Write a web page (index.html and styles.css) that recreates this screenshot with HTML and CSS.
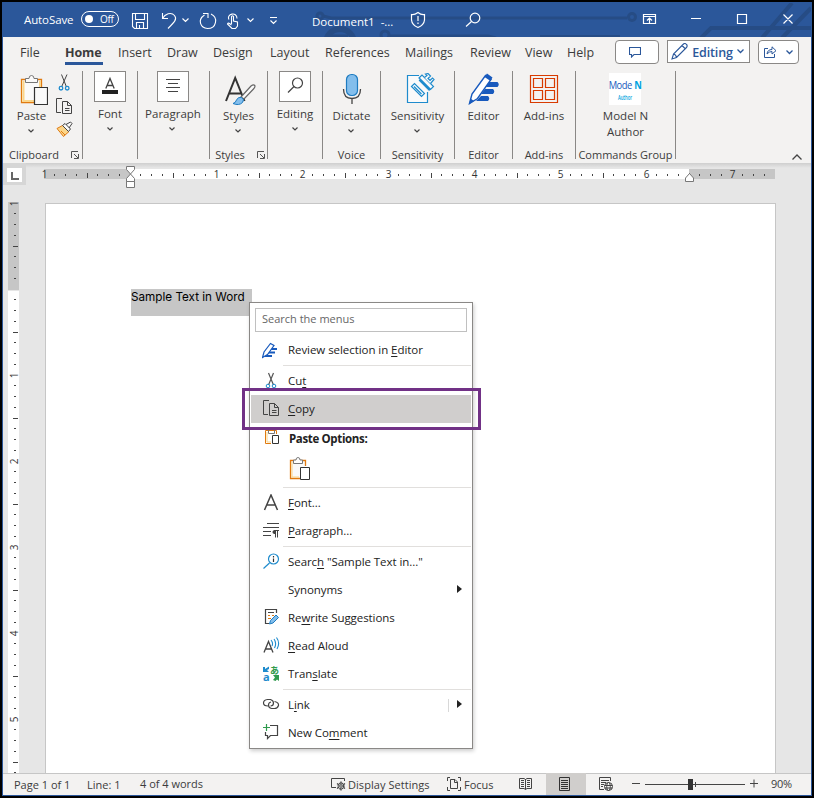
FILE: index.html
```html
<!DOCTYPE html>
<html lang="en">
<head>
<meta charset="utf-8">
<title>Document1 - Word</title>
<link rel="stylesheet" href="styles.css">
</head>
<body>
<div class="window">
  <header class="titlebar">
    <svg class="circuit" width="808" height="34" viewBox="3 3 808 34" fill="none" stroke="#264c85" stroke-width="3">
      <path d="M323 16 331 18H627"/><circle cx="320" cy="16" r="3"/><circle cx="632" cy="17" r="3.5"/>
      <circle cx="340" cy="43" r="14" stroke-width="6"/><path d="M331 36h17M388 36h100l8 2"/><circle cx="385" cy="35" r="4"/>
      <path d="M540 37h80M701 38l10-10h100M762 38l30-35M782 38l29-30" stroke-width="4"/>
    </svg>
    <span class="autosave">AutoSave</span>
    <span class="toggle"><i></i>Off</span>
    <svg class="ico" width="204" height="34" viewBox="119 3 204 34" fill="none" stroke="#fff" stroke-width="1.1">
      <path d="M132.500 13.500H147.500V28.500H134.500L132.500 26.500ZM135.500 13.500V19.500H144.500V13.500M136.500 28.500V22.500H143.500V28.500M139.500 25V28.500"/>
      <path d="M162.500 13V18.500H168M162.500 18.500C165 14 171 11.500 174.500 15.500C177.500 19 174.500 22 168 28.500M182.500 18.500 185.500 21.500 188.500 18.500M203 13.500H208V18M204.500 15C197 20 200.500 28 207.500 28.500C216.500 28.500 218.500 17.500 211 14"/>
      <path d="M229 19.500C226 14 237 11 237 18.500M231.500 24V16.500Q232.500 15 233.500 16.500V21L237.500 22V26L235.500 28.500H232L227.500 24Q228 22.500 229.500 23.500L231.500 25M247.500 18.500 250.500 21.500 253.500 18.500M270 17.500H277M270.500 20.500 273.500 23.500 276.500 20.500"/>
    </svg>
    <span class="docname">Document1&nbsp; -...</span>
    <svg class="ico" width="401" height="34" viewBox="403 3 401 34" fill="none" stroke="#fff" stroke-width="1.2">
      <path d="M418 12.500Q414.500 15 411.500 14.500V20Q412 25 418 27.500Q424 25 424.500 20V14.500Q421 15 418 12.500ZM418 16V21M418 22.500V24"/>
      <circle cx="475" cy="18" r="4.800"/><path d="M471.500 21.500 466 26.500"/>
      <path d="M643.500 14.500H655.500V23.500H643.500ZM643.500 16.500H655.500M649.500 23V18M647 20.500 649.500 18 652 20.500M691 18.500H701M737.500 14.500H746.500V23.500H737.500ZM783.500 14.500 792.500 23.500M792.500 14.500 783.500 23.500"/>
    </svg>
  </header>

  <nav class="tabs">
    <span class="t-file">File</span><span class="t-home active"><b>Home</b></span><span class="t-insert">Insert</span><span class="t-draw">Draw</span><span class="t-design">Design</span><span class="t-layout">Layout</span><span class="t-references">References</span><span class="t-mailings">Mailings</span><span class="t-review">Review</span><span class="t-view">View</span><span class="t-help">Help</span>
    <button class="btn comments"><svg width="12" height="11" viewBox="0 0 12 11" fill="none" stroke="#2b579a" stroke-width="1.1"><path d="M.5.500H11.500V7.500H5L2.500 10V7.500H.5Z"/></svg></button>
    <button class="btn mode"><svg width="17" height="17" viewBox="0 0 17 17" fill="none" stroke="#2b579a" stroke-width="1.100"><path d="M1 16 2.500 11 12 1.500Q14-.500 15.500 1.500Q17 3 15 5L5.500 14.500ZM11 2.500 14 5.500M2.500 11Q5 11.500 5.500 14.500"/></svg><span>Editing</span><svg width="7" height="5" viewBox="0 0 7 5" fill="none" stroke="#2b579a" stroke-width="1.300"><path d="M.5.500 3.500 3.500 6.500.500"/></svg></button>
    <button class="btn share"><svg width="13" height="12" viewBox="0 0 13 12" fill="none" stroke="#2b579a"><path d="M4 2.500H.5V11.500H10.500V8M3 8Q3.500 3.500 8 3.500V.8L12 4.700 8 8V5.500Q5 5.500 3 8Z"/></svg><svg width="7" height="5" viewBox="0 0 7 5" fill="none" stroke="#2b579a" stroke-width="1.300"><path d="M.5.500 3.500 3.500 6.500.500"/></svg></button>
  </nav>

  <section class="ribbon">
    <div class="group clipboard">
      <div class="cliprow">
        <div class="paste">
          <svg class="board" width="28" height="30" viewBox="20 75 28 30" fill="none"><path d="M21.500 79.500H41.500V102.500H21.500Z" fill="#fafafa" stroke="#e07a10" stroke-width="1.300"/><path d="M23.500 81V101H34M40 81V87" stroke="#fbd68a" stroke-width="2"/><path d="M25.500 82.500V78.500H29Q29 75.500 31.500 75.500T34 78.500H37.500V82.500Z" fill="#fafafa" stroke="#777"/><path d="M34.500 87.500H47.500V104.500H34.500Z" fill="#fafafa" stroke="#333" stroke-width="1.200"/></svg>
          <span>Paste</span>
          <svg class="chev" width="6" height="4" viewBox="0 0 6 4"><path d="M.5.500 3 3 5.500.500"/></svg>
        </div>
        <svg width="18" height="66" viewBox="55 73 18 66" fill="none" stroke="#444">
          <path d="M61.500 74.500 66.500 87M67 74.500 61.500 87"/><g stroke="#1e8bcd" stroke-width="1.300"><circle cx="61" cy="88.200" r="1.800"/><circle cx="67.200" cy="88.200" r="1.800"/></g>
          <path d="M62 98.500H56.500V112.500H61M62.500 101.500H67.500L71.500 105.500V113.500H62.500ZM67.500 101.500V105.500H71.500M65 108.500H69.500M65 110.500H69.500"/>
          <path d="M57 128.500 63.500 136.500 69 131.500 62.500 125.500Z" fill="#fbd68a" stroke="#e07a10"/><path d="M61 131 65 135" stroke="#e07a10"/><path d="M62.500 125.500 65 123.500 70.500 129 68.500 131.500ZM66 124.500 70.500 122 72 123.500 69 128" fill="#fafafa" stroke="#444"/>
        </svg>
      </div>
      <div class="glabel">Clipboard<svg class="launch" width="8" height="8" viewBox="0 0 8 8"><path d="M7 .5H.5V7M3 3 7 7M7.500 3V7.500H3"/></svg></div>
    </div>
    <div class="group boxed g-font"><div class="box"><svg width="30" height="29" viewBox="95 72 30 29"><path d="M105.800 88.500 110 78.500 114.200 88.500M107.200 85.500H112.800" fill="none" stroke="#444" stroke-width="1.300"/><path d="M102 90H118V94H102Z" fill="#222"/></svg></div><span>Font</span><svg class="chev" width="6" height="4" viewBox="0 0 6 4"><path d="M.5.500 3 3 5.500.500"/></svg></div>
    <div class="group boxed g-para"><div class="box"><svg width="30" height="29" viewBox="158 72 30 29" stroke="#444"><path d="M166 79.500H180M168 83.500H178M166 87.500H180M168 91.500H178"/></svg></div><span>Paragraph</span><svg class="chev" width="6" height="4" viewBox="0 0 6 4"><path d="M.5.500 3 3 5.500.500"/></svg></div>
    <div class="group g-styles"><svg class="big" width="34" height="34" viewBox="223 73 34 34" fill="none"><path d="M226 101 235.200 78 244.500 101M229 93.500H241.500" stroke="#333" stroke-width="2"/><path d="M241 97 251 86Q253.500 84 254.800 85.500Q255.500 87 253.500 89L244 99Z" fill="#fafafa" stroke="#666" stroke-width="1.200"/><path d="M233 103.500Q235.500 103 236.500 100Q238 96.500 241.500 97.500Q245 99.500 242.500 102.500Q239 106 233 103.500Z" fill="#83beec" stroke="#1e7bc0"/></svg><span>Styles</span><svg class="chev" width="6" height="4" viewBox="0 0 6 4"><path d="M.5.500 3 3 5.500.500"/></svg><div class="glabel">Styles<svg class="launch" width="8" height="8" viewBox="0 0 8 8"><path d="M7 .5H.5V7M3 3 7 7M7.500 3V7.500H3"/></svg></div></div>
    <div class="group boxed g-edit"><div class="box"><svg width="30" height="29" viewBox="280 72 30 29" fill="none" stroke="#444" stroke-width="1.200"><circle cx="297.500" cy="83" r="5"/><path d="M294 86.500 288 92.500"/></svg></div><span>Editing</span><svg class="chev" width="6" height="4" viewBox="0 0 6 4"><path d="M.5.500 3 3 5.500.500"/></svg></div>
    <div class="group g-voice"><svg class="big" width="34" height="34" viewBox="335 73 34 34" fill="none"><rect x="346.500" y="74.500" width="11" height="21" rx="5" fill="#83beec" stroke="#1e7bc0" stroke-width="1.200"/><path d="M343.500 89Q343.500 98.500 352 98.500T360.500 89M352 98.500V104" stroke="#444" stroke-width="1.300"/></svg><span>Dictate</span><svg class="chev" width="6" height="4" viewBox="0 0 6 4"><path d="M.5.500 3 3 5.500.500"/></svg><div class="glabel">Voice</div></div>
    <div class="group g-sens"><svg class="big" width="36" height="34" viewBox="401 73 36 34" fill="none" stroke="#1e8bcd" stroke-width="1.200"><path d="M419 75.500H407.500V102.500H427.500V92" fill="#fafafa"/><path d="M411.500 86.500 414.500 83.500 424.500 93.500 421.500 96.500ZM414 86.500 421.500 94" fill="#fafafa"/><path d="M419 78 422 75 433.500 86.500 430.500 89.500Z" fill="#fafafa"/><path d="M419.500 79.500 430 90" stroke-width="2.500"/><path d="M424.500 77.500 427 75.500 425.500 74 428 73.500 430.500 76 428 78.500 430 80.500 432.500 78 434 79.500 430.500 83.500" fill="#fafafa"/></svg><span>Sensitivity</span><svg class="chev" width="6" height="4" viewBox="0 0 6 4"><path d="M.5.500 3 3 5.500.500"/></svg><div class="glabel">Sensitivity</div></div>
    <div class="group g-editor"><svg class="big" width="34" height="34" viewBox="467 73 34 34"><path d="M489 82H497.500Q500 84.500 497.500 87H485ZM485 89H493Q495.500 91.500 493 94H481ZM481 96H488Q490.500 98.500 488 101H476Z" fill="#185abd"/><path d="M469.500 103.500 472 94 485.500 75.500 491 79.500 477.500 98.500Z" fill="#fff" stroke="#185abd" stroke-width="1.400"/><path d="M484.500 77 487 73.500 492.500 77.500 490.500 81Z" fill="#185abd"/><path d="M469 104.500 470.500 98.500 474 101Z" fill="#185abd"/></svg><span>Editor</span><div class="glabel">Editor</div></div>
    <div class="group g-addins"><svg class="big" width="34" height="34" viewBox="527 73 34 34" fill="none" stroke="#d83b01" stroke-width="1.200"><path d="M530.500 75.500H557.500V102.500H530.500ZM533.500 78.500H542.500V87.500H533.500ZM545.500 78.500H554.500V87.500H545.500ZM533.500 90.500H542.500V99.500H533.500ZM545.500 90.500H554.500V99.500H545.500Z"/></svg><span>Add-ins</span><div class="glabel">Add-ins</div></div>
    <div class="group g-commands"><div class="modeln"><div class="ml"><span>Mode</span><b>N</b></div><em>Author</em></div><span>Model N<br>Author</span><div class="glabel">Commands Group</div></div>
    <svg class="collapse" width="10" height="6" viewBox="0 0 10 6" fill="none" stroke="#444" stroke-width="1.300"><path d="M.5 5.500 5 1 9.500 5.500"/></svg>
  </section>

  <main class="workspace">
    <div class="toprow">
      <div class="corner"><i></i></div>
      <svg class="hruler" width="785" height="26" viewBox="26 163 785 26">
        <defs><pattern id="hticks" x="130" y="169" width="86" height="11" patternUnits="userSpaceOnUse"><path d="M10 5H11V7H10ZM21 5H22V7H21ZM32 5H33V7H32ZM43 4H44V9H43ZM53 5H54V7H53ZM64 5H65V7H64ZM75 5H76V7H75Z" fill="#444"/></pattern></defs>
        <path d="M44 169H130V179H44ZM689 169H775V179H689Z" fill="#c6c6c6"/><path d="M130 169H689V179H130Z" fill="#fff"/>
        <path d="M44 169H775V180H44Z" fill="url(#hticks)"/>
        <g class="nums"><text x="44.500" y="178">1</text><text x="216.500" y="178">1</text><text x="302.500" y="178">2</text><text x="388.500" y="178">3</text><text x="474.500" y="178">4</text><text x="560.500" y="178">5</text><text x="646.500" y="178">6</text><text x="732.500" y="178">7</text></g>
        <path d="M126.500 166.500H134.500V169.500L130.500 174 126.500 169.500ZM130.500 174 134.500 178.500V181.500H126.500V178.500ZM126.500 181.500H134.500V187.500H126.500ZM689.500 173.500 693.500 178V181.500H685.500V178Z" fill="#fff" stroke="#777"/>
      </svg>
    </div>
    <div class="body">
      <svg class="vruler" width="42" height="584" viewBox="3 189 42 584">
        <defs><pattern id="vticks" x="8" y="290" width="11" height="86" patternUnits="userSpaceOnUse"><path d="M6 9H8V10H6ZM6 20H8V21H6ZM6 31H8V32H6ZM5 42H10V43H5ZM6 52H8V53H6ZM6 63H8V64H6ZM6 74H8V75H6Z" fill="#444"/></pattern></defs>
        <path d="M8 202H19V290H8Z" fill="#c6c6c6"/><path d="M8 291H19V773H8Z" fill="#fff"/>
        <path d="M8 202H19V773H8Z" fill="url(#vticks)"/>
        <g class="nums"><text transform="translate(18 203.500) rotate(-90)">1</text><text transform="translate(18 375.500) rotate(-90)">1</text><text transform="translate(18 461.500) rotate(-90)">2</text><text transform="translate(18 547.500) rotate(-90)">3</text><text transform="translate(18 633.500) rotate(-90)">4</text><text transform="translate(18 719.500) rotate(-90)">5</text></g>
      </svg>
      <article class="page"><p>Sample Text in Word</p></article>
    </div>
  </main>

  <footer class="status">
    <span class="s-page">Page 1 of 1</span><span class="s-line">Line: 1</span><span class="s-words">4 of 4 words</span>
    <svg width="17" height="22" viewBox="331 773 17 22" fill="none" stroke="#444"><path d="M336 787.500H331.500V778.500H344.500V781"/><circle cx="341" cy="786" r="2.800" stroke-width="1.600" stroke-dasharray="1.600 .6"/><circle cx="341" cy="786" r="1.300"/><path d="M341 781.500V783M341 789V790.500M337 783.500 338.500 784.500M345 783.500 343.500 784.500M337 788.500 338.500 787.500M345 788.500 343.500 787.500" stroke-width="1.300"/></svg>
    <span class="s-display">Display Settings</span>
    <svg width="17" height="22" viewBox="447 773 17 22" fill="none" stroke="#444"><path d="M450 777.500H447.500V781M447.500 787V790.500H450M458 777.500H460.500V781M460.500 787V790.500H458M450.500 779.500H455L457.500 782V788.500H450.500ZM454.500 779.500V782.500H457.500"/></svg>
    <span class="s-focus">Focus</span>
    <svg width="34" height="22" viewBox="512 773 34 22" fill="none" stroke="#444"><path d="M525.500 779V789.500M519.500 778.500H524L525.500 779.500 527 778.500H531.500V788.500H527L525.500 789.500 524 788.500H519.500ZM521 780.500H524M521 782.500H524M521 784.500H524M521 786.500H524M527 780.500H530M527 782.500H530M527 784.500H530M527 786.500H530"/></svg>
    <span class="s-print"><svg width="12" height="14" viewBox="0 0 12 14" fill="none" stroke="#333"><path d="M.5.500H10.500V13.500H.5ZM2 3.500H9M2 5.500H9M2 7.500H9M2 9.500H9M2 11.500H9"/></svg></span>
    <svg width="179" height="22" viewBox="586 773 179 22" fill="none" stroke="#444"><path d="M604 789.500H599.500V777.500H610.500V781M601 780.500H609M601 782.500H606M601 784.500H604M601 786.500H603"/><circle cx="608.500" cy="786.500" r="4"/><ellipse cx="608.500" cy="786.500" rx="1.800" ry="4"/><path d="M604.500 785.500H612.500M604.500 788H612.500M632 783.500H640M645 784.500H745M695.500 782V787M750 783.500H758M754 779.500V787.500"/><path d="M688 779H693V790H688Z" fill="#333" stroke="none"/></svg>
    <span class="s-zoom">90%</span>
  </footer>
</div>

<div class="menu">
  <div class="search">Search the menus</div>
  <div class="item"><svg viewBox="263 340 18 18"><path d="M272 347H278V349H271ZM270 350.500H276V352.500H268ZM267 354H273V356H265Z" fill="#185abd"/><path d="M263.500 356.500 265 351 271.500 342.500 275 344.500 268.500 353.500Z" fill="#fff" stroke="#185abd" stroke-width="1.200"/></svg><span>Review selection in <u>E</u>ditor</span></div>
  <hr>
  <div class="item"><svg viewBox="262 372 18 18" fill="none" stroke="#555"><path d="M268.500 373 273.500 385M273.500 373 268.500 385" stroke-width="1.200"/><circle cx="268" cy="386" r="1.800" stroke="#1e8bcd"/><circle cx="274" cy="386" r="1.800" stroke="#1e8bcd"/></svg><span>Cu<u>t</u></span></div>
  <div class="item hot"><svg viewBox="262 400 18 18" fill="none" stroke="#444"><path d="M269 400.500H263.500V414.500H268M269.500 403.500H274.500L278.500 407.500V415.500H269.500ZM274.500 403.500V407.500H278.500M272 410.500H276.500M272 412.500H276.500"/></svg><span><u>C</u>opy</span></div>
  <div class="item head"><svg viewBox="262 429 18 18" fill="none"><path d="M271 443.500H265.500V430.500H276.500V434" stroke="#e07a10"/><path d="M267 432V442H271" stroke="#fbd68a"/><path d="M268.500 429V433.500H274.500V429" stroke="#777"/><path d="M272.500 435.500H278.500V443.500H272.500Z" fill="#fff" stroke="#333"/></svg><b>Paste Options:</b></div>
  <div class="pasteopt"><svg width="22" height="24" viewBox="289 457 22 24" fill="none"><path d="M300 478.500H290.500V460.500H305.500V466" fill="#fafafa" stroke="#e07a10" stroke-width="1.300"/><path d="M292 462V477H299" stroke="#fbd68a"/><path d="M293.500 463.500V460H296Q296 457.500 298 457.500T300 460H302.500V463.500Z" fill="#fff" stroke="#777"/><path d="M300.500 467.500H309.500V479.500H300.500Z" fill="#fff" stroke="#333"/></svg></div>
  <hr>
  <div class="item"><svg viewBox="262 494 18 18" fill="none" stroke="#444" stroke-width="1.500"><path d="M264.500 510 271 495 277.500 510M266.500 505H275.500"/></svg><span><u>F</u>ont...</span></div>
  <div class="item"><svg viewBox="262 522 18 18" fill="none" stroke="#444"><path d="M267 523.500H279M263 527.500H279M263 531.500H271M263 535.500H271M275.500 531V537.500M277.500 531V537.500M274 530.500H279"/><path d="M275.500 530Q272.500 530 272.500 532T275.500 534Z" fill="#444" stroke="none"/></svg><span><u>P</u>aragraph...</span></div>
  <hr>
  <div class="item"><svg viewBox="262 553 18 18" fill="none" stroke="#1e8bcd" stroke-width="1.200"><circle cx="273.500" cy="559" r="5"/><path d="M269.500 563 263.500 568.500"/><path d="M273.500 558.500V562M273.500 556V557.500" stroke="#333"/></svg><span>Searc<u>h</u> "Sample Text in..."</span></div>
  <div class="item"><svg viewBox="0 0 18 18"></svg><span>Synonyms</span><i class="arrow"></i></div>
  <div class="item"><svg viewBox="262 609 18 18" fill="none" stroke="#444"><path d="M276.500 613V609.500H265.500V623.500H269" stroke-width="1.200"/><path d="M268 612.500H274"/><path d="M268 615.500H270M272 615.500H274M268 618.500H271" stroke="#e07a10"/><path d="M269.500 624 270.500 620.500 276 615 278.500 617.500 273 623Z" fill="#83beec" stroke="#1e7bc0"/></svg><span>Re<u>w</u>rite Suggestions</span></div>
  <div class="item"><svg viewBox="262 637 18 18" fill="none" stroke="#444" stroke-width="1.300"><path d="M264 652.500 268.500 641.500 273 652.500M265.500 649H271.500"/><path d="M271 640Q273.500 643 272 646M274 639Q277 643 274.500 648M276.500 637.500Q280.500 643 277 649" stroke="#1e8bcd" stroke-width="1.100"/></svg><span><u>R</u>ead Aloud</span></div>
  <div class="item"><svg viewBox="262 665 18 18"><path d="M263 667H265V669L269 666.500V669L267 670 269 672H263Z" fill="#1e8bcd"/><path d="M273 675H279V681L277 679.500 275.500 681 273 680 275 677.500Z" fill="#2f9a4d"/><text class="ja" x="270" y="673.500">あ</text><text class="lat" x="263" y="681">a</text></svg><span>Tran<u>s</u>late</span></div>
  <hr>
  <div class="item"><svg viewBox="262 696 18 18" fill="none" stroke="#444" stroke-width="1.200"><path d="M268 706Q263.500 706 263.500 703T267.500 699.500H270.500Q273.500 700.500 273.500 703Q273.500 706 270.500 706M274.500 701.500Q279 702.500 278.500 705.500Q277.500 708.500 274.500 708.500H271.500Q268.500 708 268.500 705Q268.500 702.500 271 702"/></svg><span>L<u>i</u>nk</span><i class="split"></i><i class="arrow"></i></div>
  <div class="item"><svg viewBox="262 724 18 18" fill="none" stroke="#444" stroke-width="1.200"><path d="M270 725.500H277.500V735.500H270.500L267.500 738.500V735.500H265.500V732"/><path d="M263 727.500H270M266.500 724V731" stroke="#2f9a4d"/></svg><span>New Co<u>m</u>ment</span></div>
</div>
<div class="callout"></div>
</body>
</html>
```
FILE: styles.css
```css
* { box-sizing: border-box; }
body {
  margin: 0;
  width: 814px;
  height: 798px;
  padding: 2px;
  overflow: hidden;
  background: #000;
  color: #3c3c3c;
  font: 11.5px/16px "Open Sans", "Noto Sans", sans-serif;
  white-space: nowrap;
}
svg { flex: none; display: block; }
.window {
  width: 810px;
  height: 794px;
  border: 1px solid #2b579a;
  display: flex;
  flex-direction: column;
  background: #e6e6e6;
}

/* Title bar */
.titlebar { position: relative; height: 34px; flex: none; display: flex; background: #2b579a; color: #fff; }
.circuit { position: absolute; left: 0; top: 0; }
.ico { position: relative; }
.autosave { position: relative; width: 78px; padding: 9px 0 0 21px; letter-spacing: -.1px; }
.toggle {
  position: relative;
  width: 38px;
  height: 16px;
  margin-top: 8px;
  border: 1px solid #fff;
  border-radius: 8px;
  padding-left: 3px;
  display: flex;
  align-items: center;
  gap: 7px;
  font-size: 10px;
  letter-spacing: -.3px;
}
.toggle i { width: 8px; height: 8px; border-radius: 50%; background: #fff; }
.docname { position: relative; width: 91px; margin-left: -11px; padding-top: 11px; }

/* Tabs */
.tabs { height: 34px; flex: none; display: flex; background: #f3f2f1; padding-left: 17px; font-size: 12.5px; }
.tabs > span { flex: none; padding-top: 8px; height: 28px; }
.t-file { width: 45px; }
.t-home { width: 53px; }
.t-insert { width: 49px; }
.t-draw { width: 46px; }
.t-design { width: 57px; }
.t-layout { width: 55px; }
.t-references { width: 80px; }
.t-mailings { width: 65px; }
.t-review { width: 55px; }
.t-view { width: 42px; }
.t-help { width: 48px; }
.t-home b { display: block; width: 38px; height: 20px; border-bottom: 3px solid #2b579a; letter-spacing: -.1px; }
.btn {
  margin: 3px 0 0;
  padding: 0;
  height: 24px;
  display: flex;
  align-items: center;
  justify-content: center;
  background: #fff;
  border: 1px solid #8a8886;
  border-radius: 4px;
  color: #2b579a;
  font: 600 12.5px/16px "Open Sans", sans-serif;
}
.comments { width: 44px; padding-right: 4px; }
.mode { width: 83px; height: 23px; margin-left: 8px; border-radius: 0; padding-right: 2px; gap: 4px; letter-spacing: -.15px; }
.mode span { padding-top: 2px; }
.share { width: 41px; margin-left: 8px; gap: 9px; }

/* Ribbon */
.ribbon { display: flex; flex: none; height: 92px; background: #f3f2f1; }
.group { position: relative; height: 88px; border-right: 1px solid #8a8886; display: flex; flex-direction: column; align-items: center; text-align: center; }
.clipboard { width: 80px; }
.g-font { width: 55px; }
.g-para { width: 72px; }
.g-styles { width: 58px; }
.g-edit { width: 55px; }
.g-voice { width: 58px; }
.g-sens { width: 74px; }
.g-editor { width: 58px; }
.g-addins { width: 63px; }
.g-commands { width: 100px; }
.box { width: 32px; height: 31px; margin-bottom: 4px; background: #fff; border: 1px solid #8a8886; }
.g-para .box, .g-para > span { margin-right: 1px; }
.big { margin: 2px 0 1px; }
.g-styles .big, .g-sens .big { margin-left: 3px; }
.g-voice .big, .g-editor .big { margin-left: 1px; }
.chev { fill: none; stroke: #444; stroke-width: 1.2; margin: 5px 1px 0 0; }
.g-para .chev { margin-right: 3px; }
.g-font .chev, .g-edit .chev { margin-right: 0; }
.glabel { margin-top: auto; line-height: 8px; display: flex; align-items: center; font-size: 11px; }
.launch { fill: none; stroke: #555; margin-left: 12px; }
.clipboard .glabel { padding-left: 3px; }
.g-styles .glabel { padding-left: 3px; }
.cliprow { display: flex; align-self: flex-start; gap: 7px; padding-top: 2px; }
.paste { width: 45px; padding: 2px 0 0 12px; display: flex; flex-direction: column; align-items: center; }
.paste > span { margin-top: 3px; }
.board { margin-left: 5px; }
.modeln { width: 32px; height: 32px; margin: 2px 1px 3px 0; background: #fff; color: #185abd; }
.ml { display: flex; justify-content: center; gap: 3px; height: 17px; padding-top: 4px; font-size: 11px; letter-spacing: -.6px; transform: scaleX(.85); }
.ml b { color: #00a3e0; }
.modeln em { display: block; color: #00a3e0; font: 600 7px/16px "Open Sans", sans-serif; transform: scaleX(.6); }
.collapse { margin: 83px 0 0 116px; }

/* Rulers and page */
.workspace { flex: 1; min-height: 0; display: flex; flex-direction: column; background: linear-gradient(#cfcfcf, #e6e6e6 5px); }
.toprow { display: flex; height: 26px; flex: none; }
.corner { width: 23px; height: 22px; background: #d6d6d6; padding: 5px 4px 3px; }
.corner i { display: block; width: 15px; height: 14px; background: #fff; padding: 4px; }
.corner i::before { content: ""; display: block; width: 6px; height: 6px; border: solid #666; border-width: 0 0 2px 2px; }
.nums { font: 10px "Open Sans", sans-serif; fill: #333; text-anchor: middle; }
.body { display: flex; flex: 1; min-height: 0; }
.page { width: 731px; margin-top: 14px; background: #fff; border: 1px solid #c6c6c6; border-bottom: 0; padding: 85px 0 0 85px; }
.page p { margin: 0; width: 121px; height: 27px; background: #c6c6c6; color: #000; font: 11.7px/16px Inter, sans-serif; letter-spacing: 0; }

/* Status bar */
.status { flex: none; height: 22px; display: flex; background: #f3f2f1; box-shadow: inset 0 1px #c6c6c6; padding-left: 11px; line-height: 24px; }
.status > span { flex: none; font-size: 11px; }
.s-page { width: 73px; }
.s-line { width: 53px; }
.status > .s-words { width: 191px; line-height: 22px; }
.s-display { width: 99px; letter-spacing: .05px; }
.s-focus { width: 48px; }
.s-print { width: 40px; background: #d0cecc; padding: 4px 0 0 13px; }
.status > .s-zoom { margin-left: 6px; line-height: 22px; letter-spacing: -.3px; }

/* Context menu */
.menu {
  position: absolute;
  left: 249px;
  top: 302px;
  width: 224px;
  height: 447px;
  padding-top: 5px;
  background: #fff;
  border: 1px solid #8a8886;
  box-shadow: 1px 2px 4px rgba(0, 0, 0, .2);
  color: #222;
  letter-spacing: -.06px;
}
.search { margin: 0 5px 4px; width: 212px; height: 24px; border: 1px solid #c0c0c0; padding: 2px 0 0 6px; color: #666; font-size: 11px; letter-spacing: 0; }
.item { display: flex; align-items: center; height: 28px; margin: 0 1px; padding-left: 11px; }
.item svg { width: 18px; height: 18px; margin-right: 8px; }
.item u { text-decoration-thickness: 1px; text-underline-offset: 2px; }
.hot { background: #d0cecd; }
.head { height: 31px; color: #222; }
.head svg { margin-bottom: 2px; }
.head b { margin: 1px 0 0 1px; letter-spacing: -.35px; }
.pasteopt { height: 32px; padding: 3px 0 0 39px; }
.menu hr { margin: 1px 1px 1px 33px; border: 0; height: 1px; background: #e1dfdd; }
.arrow { margin: 0 9px 2px auto; border: solid transparent; border-width: 4px 0 4px 5px; border-left-color: #222; }
.split { margin-left: auto; height: 13px; border-left: 1px solid #d8d8d8; }
.split + .arrow { margin-left: 8px; }
.ja { font: 700 9px "Noto Sans CJK JP", sans-serif; fill: #2f9a4d; }
.lat { font: 700 11px "Open Sans", sans-serif; fill: #1e8bcd; }
.callout { position: absolute; left: 242px; top: 388px; width: 239px; height: 42px; border: 3px solid #713186; }
```
